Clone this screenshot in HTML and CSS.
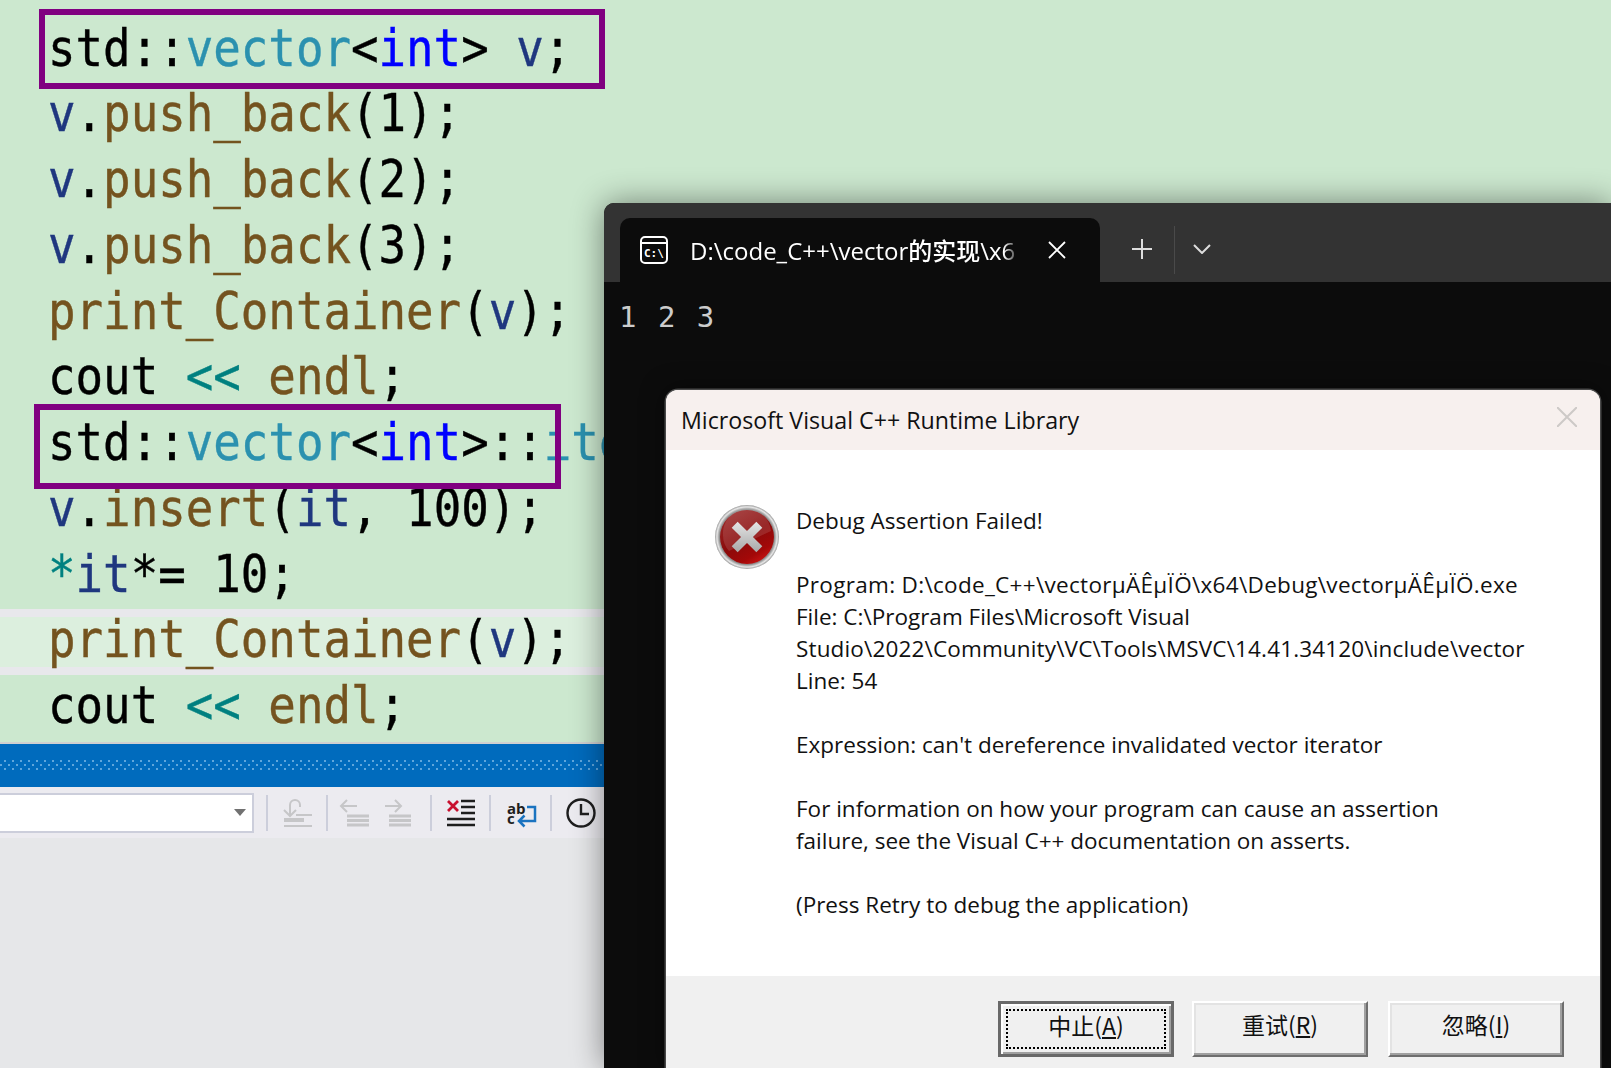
FILE: index.html
```html
<!DOCTYPE html>
<html lang="zh">
<head>
<meta charset="utf-8">
<title>Debug Assertion</title>
<link rel="stylesheet" href="styles.css">
</head>
<body>
<div class="ide">
  <div class="code">
    <div class="line"><span class="txt">std::<b class="ty">vector</b>&lt;<b class="kw">int</b>&gt; <b class="var">v</b>;</span></div>
    <div class="line"><span class="txt"><b class="var">v</b>.<b class="fn">push_back</b>(1);</span></div>
    <div class="line"><span class="txt"><b class="var">v</b>.<b class="fn">push_back</b>(2);</span></div>
    <div class="line"><span class="txt"><b class="var">v</b>.<b class="fn">push_back</b>(3);</span></div>
    <div class="line"><span class="txt"><b class="fn">print_Container</b>(<b class="var">v</b>);</span></div>
    <div class="line"><span class="txt">cout <b class="op">&lt;&lt;</b> <b class="fn">endl</b>;</span></div>
    <div class="line"><span class="txt">std::<b class="ty">vector</b>&lt;<b class="kw">int</b>&gt;::<b class="ty">ite</b></span></div>
    <div class="line"><span class="txt"><b class="var">v</b>.<b class="fn">insert</b>(<b class="var">it</b>, 100);</span></div>
    <div class="line"><span class="txt"><b class="op">*</b><b class="var">it</b>*= 10;</span></div>
    <div class="line hl"><span class="txt"><b class="fn">print_Container</b>(<b class="var">v</b>);</span></div>
    <div class="line"><span class="txt">cout <b class="op">&lt;&lt;</b> <b class="fn">endl</b>;</span></div>
    <div class="mark mark-a"></div>
    <div class="mark mark-b"></div>
  </div>
  <div class="titlebar">
    <svg class="dots" width="100%" height="10">
      <defs><pattern id="dotgrid" width="8" height="10" patternUnits="userSpaceOnUse"><rect x="4" y="0" width="2" height="2"/><rect x="0" y="4" width="2" height="2"/><rect x="4" y="8" width="2" height="2"/></pattern></defs>
      <rect width="100%" height="10" fill="url(#dotgrid)"/>
    </svg>
  </div>
  <div class="toolbar">
    <div class="combo"><span class="caret"></span></div>
    <span class="sep"></span>
    <div class="slot s1">
      <svg width="29" height="29" viewBox="0 0 29 29" fill="none" stroke="#c6c6c8" stroke-width="2"><path d="M7 17V7a5 5 0 0 1 10 0v2"/><path d="M1 12l6 6 6-6"/><path d="M13 17h16"/><path d="M1 22h20" stroke-width="4"/><path d="M1 28h28"/></svg>
    </div>
    <span class="sep"></span>
    <div class="slot s2">
      <svg width="28" height="29" viewBox="0 0 28 29" fill="none" stroke="#c6c6c8" stroke-width="2"><path d="M0 8h16M6 2L0 8l6 6"/><path d="M6 18h22M6 22.500h22M6 27h22" stroke-width="3"/></svg>
      <svg width="28" height="29" viewBox="0 0 28 29" fill="none" stroke="#c6c6c8" stroke-width="2"><path d="M0 8h16M10 2l6 6-6 6"/><path d="M4 18h22M4 22.500h22M4 27h22" stroke-width="3"/></svg>
    </div>
    <span class="sep"></span>
    <div class="slot s3">
      <svg width="28" height="28" viewBox="0 0 28 28" fill="none" stroke="#1e1e1e" stroke-width="2.400"><path d="M1 2l10 10M11 2L1 12" stroke="#c8102e" stroke-width="2.800"/><path d="M14 2h14M14 8h14M14 14h14M0 20h28M0 26h28"/></svg>
    </div>
    <span class="sep"></span>
    <div class="slot s4">
      <svg width="30" height="30" viewBox="0 0 30 30" fill="none"><text x="1" y="15.500" class="abc">ab</text><text x="1" y="26" class="abc">c</text><path d="M21 9h8v14H13M18.500 17.500L13 23l5.500 5.500" stroke="#1a73c0" stroke-width="2.500"/></svg>
    </div>
    <span class="sep"></span>
    <div class="slot s5">
      <svg width="30" height="30" viewBox="0 0 30 30" fill="none" stroke="#1e1e1e" stroke-width="2.400"><circle cx="15" cy="15" r="13.500"/><path d="M15 6v10h8"/></svg>
    </div>
  </div>
  <div class="below"></div>
</div>

<section class="terminal">
  <div class="tabs">
    <div class="tab">
      <svg class="tab-icon" width="28" height="28" viewBox="0 0 28 28" fill="none" stroke="#fff" stroke-width="2"><rect x="1" y="1" width="26" height="26" rx="4"/><path d="M1 7h26"/><text x="4" y="21" class="cmd">C:\</text></svg>
      <span class="tab-title">D:\code_C++\vector的实现\x6</span>
      <svg class="tab-close" width="18" height="18" viewBox="0 0 18 18" stroke="#fff" stroke-width="1.800"><path d="M1 1l16 16M17 1L1 17"/></svg>
    </div>
    <svg class="tab-plus" width="20" height="20" viewBox="0 0 20 20" stroke="#ddd" stroke-width="2"><path d="M10 0v20M0 10h20"/></svg>
    <span class="tab-sep"></span>
    <svg class="tab-more" width="18" height="10" viewBox="0 0 18 10" fill="none" stroke="#ddd" stroke-width="2"><path d="M1 1l8 8 8-8"/></svg>
  </div>
  <div class="output">1 2 3</div>

  <div class="dialog">
    <header class="dlg-title">
      <span>Microsoft Visual C++ Runtime Library</span>
      <svg width="20" height="20" viewBox="0 0 20 20" stroke="#cdc9c7" stroke-width="2"><path d="M0 0l20 20M20 0L0 20"/></svg>
    </header>
    <div class="dlg-body">
      <svg class="err" width="64" height="64" viewBox="0 0 64 64">
        <defs>
          <radialGradient id="rim" cx="50%" cy="50%" r="50%"><stop offset="86%" stop-color="#8f8f8f"/><stop offset="94%" stop-color="#e8e8e8"/><stop offset="100%" stop-color="#9a9a9a"/></radialGradient>
          <linearGradient id="red" x1="0.200" y1="0" x2="0.800" y2="1"><stop offset="0" stop-color="#9c2a2a"/><stop offset="0.500" stop-color="#8a0b0b"/><stop offset="0.800" stop-color="#a30808"/><stop offset="1" stop-color="#d01616"/></linearGradient>
          <linearGradient id="xg" x1="0" y1="0" x2="0" y2="1"><stop offset="0" stop-color="#e4e4e4"/><stop offset="1" stop-color="#a8a8a8"/></linearGradient>
        </defs>
        <circle cx="32" cy="32" r="32" fill="url(#rim)"/>
        <circle cx="32" cy="32" r="27" fill="url(#red)"/>
        <path d="M8 30A24 24 0 0 1 56 26L14 46A24 24 0 0 1 8 30z" fill="#fff" opacity="0.120"/>
        <path d="M21 15l11 11 11-11 7 7-11 11 11 11-7 7-11-11-11 11-7-7 11-11-11-11z" fill="url(#xg)" transform="translate(32 32) scale(0.850) translate(-32 -33)"/>
      </svg>
      <div class="msg">
        <p>Debug Assertion Failed!</p>
        <p><span class="wide">Program: D:\code_C++\vectorµÄÊµÏÖ\x64\Debug\vectorµÄÊµÏÖ.exe</span><br>File: C:\Program Files\Microsoft Visual<br><span class="mid">Studio\2022\Community\VC\Tools\MSVC\14.41.34120\include\vector</span><br>Line: 54</p>
        <p>Expression: can't dereference invalidated vector iterator</p>
        <p>For information on how your program can cause an assertion<br>failure, see the Visual C++ documentation on asserts.</p>
        <p>(Press Retry to debug the application)</p>
      </div>
    </div>
    <footer class="dlg-foot">
      <button class="btn default"><span class="focus">中止(<u>A</u>)</span></button>
      <button class="btn"><span class="focus">重试(<u>R</u>)</span></button>
      <button class="btn"><span class="focus">忽略(<u>I</u>)</span></button>
    </footer>
  </div>
</section>
</body>
</html>
```

FILE: styles.css
```css
* { box-sizing: border-box; }
html, body { margin: 0; height: 1068px; overflow: hidden; background: #e6e7e9; }
body { position: relative; }

.ide { display: flex; flex-direction: column; height: 1068px; overflow: hidden; }

.code {
  position: relative;
  isolation: isolate;
  height: 742px;
  flex: none;
  padding-top: 15.500px;
  background: #cce8cf;
  overflow: hidden;
}
.line {
  position: relative;
  height: 65.750px;
  line-height: 65.750px;
  padding-left: 48px;
  white-space: pre;
  color: #000;
  font-family: "DejaVu Sans Mono", monospace;
  font-size: 51px;
  -webkit-text-stroke: 0.400px currentColor;
}
.txt { display: inline-block; transform: scaleX(0.897); transform-origin: 0 50%; }
.txt b { font-weight: 400; }
.ty { color: #2b91af; }
.kw { color: #0000ff; }
.var { color: #1f377f; }
.fn { color: #74531f; }
.op { color: #008080; }
.hl::before {
  content: "";
  box-sizing: border-box;
  position: absolute;
  z-index: -1;
  left: 0; right: 0; top: 1.500px;
  height: 66px;
  background: #dcefde;
  border-top: 8px solid #e8e8ec;
  border-bottom: 8px solid #e8e8ec;
}
.mark { position: absolute; border: 6px solid #800080; }
.mark-a { left: 39px; top: 9px; width: 566px; height: 80px; }
.mark-b { left: 34px; top: 404px; width: 527px; height: 85px; }

.titlebar {
  height: 45px;
  flex: none;
  border-top: 2px solid #d0d0d0;
  background: #006bbd;
}
.dots { display: block; margin-top: 16px; fill: #5fa6dc; }

.toolbar {
  height: 51px;
  flex: none;
  background: #ecebf0;
  display: flex;
  align-items: center;
}
.combo {
  width: 254px;
  height: 40px;
  background: #fff;
  border: 2px solid #cccedb;
  border-left: 0;
  display: flex;
  align-items: center;
  justify-content: flex-end;
  padding-right: 6px;
}
.caret { width: 0; height: 0; border: 6px solid transparent; border-top: 7px solid #717171; border-bottom: 0; }
.sep { width: 2px; height: 36px; background: #cccedb; flex: none; }
.combo + .sep { margin-left: 12px; }
.slot { display: flex; align-items: center; justify-content: center; flex: none; }
.slot svg { display: block; overflow: visible; }
.s1 { width: 58px; }
.s2 { width: 102px; gap: 16px; padding-right: 4px; }
.s3 { width: 57px; }
.s4 { width: 59px; }
.s5 { width: 58px; }
.abc { font-family: "Open Sans", sans-serif; font-size: 15px; font-weight: 700; fill: #1e1e1e; stroke: none; }
.below { flex: 1; background: #e6e7e9; }

.terminal {
  position: absolute;
  left: 604px;
  top: 203px;
  width: 1007px;
  height: 865px;
  background: #0c0c0c;
  border-radius: 10px 0 0 0;
  box-shadow: 0 0 32px rgba(0, 0, 0, 0.45);
}
.tabs {
  height: 79px;
  background: #333;
  border-radius: 10px 0 0 0;
  padding: 15px 0 0 16px;
  display: flex;
  align-items: center;
}
.tab {
  width: 480px;
  height: 64px;
  background: #0c0c0c;
  border-radius: 10px 10px 0 0;
  display: flex;
  align-items: center;
  padding-left: 20px;
  flex: none;
}
.tab-icon { flex: none; }
.cmd { font-family: "DejaVu Sans Mono", monospace; font-size: 11px; font-weight: 700; fill: #fff; stroke: none; }
.tab-title {
  width: 330px;
  margin-left: 22px;
  overflow: hidden;
  white-space: nowrap;
  color: #fff;
  font-family: "Open Sans", "Noto Sans CJK SC", sans-serif;
  font-size: 24px;
  font-weight: 500;
  line-height: 34px;
  position: relative;
  top: 1px;
  -webkit-mask-image: linear-gradient(90deg, #000 95%, transparent);
  mask-image: linear-gradient(90deg, #000 95%, transparent);
}
.tab-close { flex: none; margin-left: 28px; }
.tab-plus { flex: none; margin: 0 22px 0 32px; position: relative; top: -1px; }
.tab-sep { width: 1px; height: 48px; background: #4a4a4a; flex: none; }
.tab-more { flex: none; margin-left: 18px; position: relative; top: -1px; }
.output {
  padding: 15px 0 0 15px;
  font-family: "DejaVu Sans Mono", monospace;
  font-size: 29px;
  letter-spacing: 2px;
  line-height: 40px;
  color: #ccc;
}

.dialog {
  position: absolute;
  left: 62px;
  top: 187px;
  width: 934px;
  height: 678px;
  background: #fff;
  border-radius: 12px 12px 0 0;
  box-shadow: 0 0 0 1.500px #4a4a4a, 0 0 24px rgba(0, 0, 0, 0.5);
  display: flex;
  flex-direction: column;
  font-family: "Open Sans", sans-serif;
  color: #111;
  overflow: hidden;
}
.dlg-title {
  height: 60px;
  flex: none;
  background: #f7f0ee;
  padding: 0 23px 6px 15px;
  display: flex;
  align-items: center;
  justify-content: space-between;
  font-size: 23.200px;
}
.dlg-title span { position: relative; top: 3px; }
.dlg-body {
  height: 526px;
  flex: none;
  padding: 55px 0 0 49px;
  display: flex;
  align-items: flex-start;
}
.err { flex: none; margin-right: 17px; }
.msg { font-size: 22.500px; line-height: 32px; white-space: nowrap; }
.msg p { margin: 0 0 32px; }
.wide { letter-spacing: 0.310px; }
.mid { letter-spacing: 0.150px; }
.dlg-foot {
  flex: 1;
  background: #f0f0f0;
  display: flex;
  padding: 25px 0 0 332px;
  align-items: flex-start;
}
.btn {
  width: 176px;
  height: 56px;
  padding: 0;
  flex: none;
  background: #f0f0f0;
  border: 2px solid;
  border-color: #fff #6e6e6e #6e6e6e #fff;
  box-shadow: inset -2px -2px 0 #a0a0a0, inset 2px 2px 0 #e3e3e3;
  font-family: "Noto Sans CJK SC", sans-serif;
  font-size: 23px;
  color: #111;
  display: flex;
  align-items: center;
  justify-content: center;
}
.btn + .btn { margin-left: 18px; }
.btn + .btn + .btn { margin-left: 20px; }
.default {
  border: 3px solid #696969;
  box-shadow: inset 2px 2px 0 #fff, inset -2px -2px 0 #a0a0a0;
}
.focus {
  display: flex;
  align-items: center;
  justify-content: center;
  width: 100%;
  margin: 0 5px;
  height: 40px;
  padding-bottom: 10px;
}
.default .focus { border: 2px dotted #000; padding-bottom: 8px; }
.focus u { text-underline-offset: 2px; }
```
